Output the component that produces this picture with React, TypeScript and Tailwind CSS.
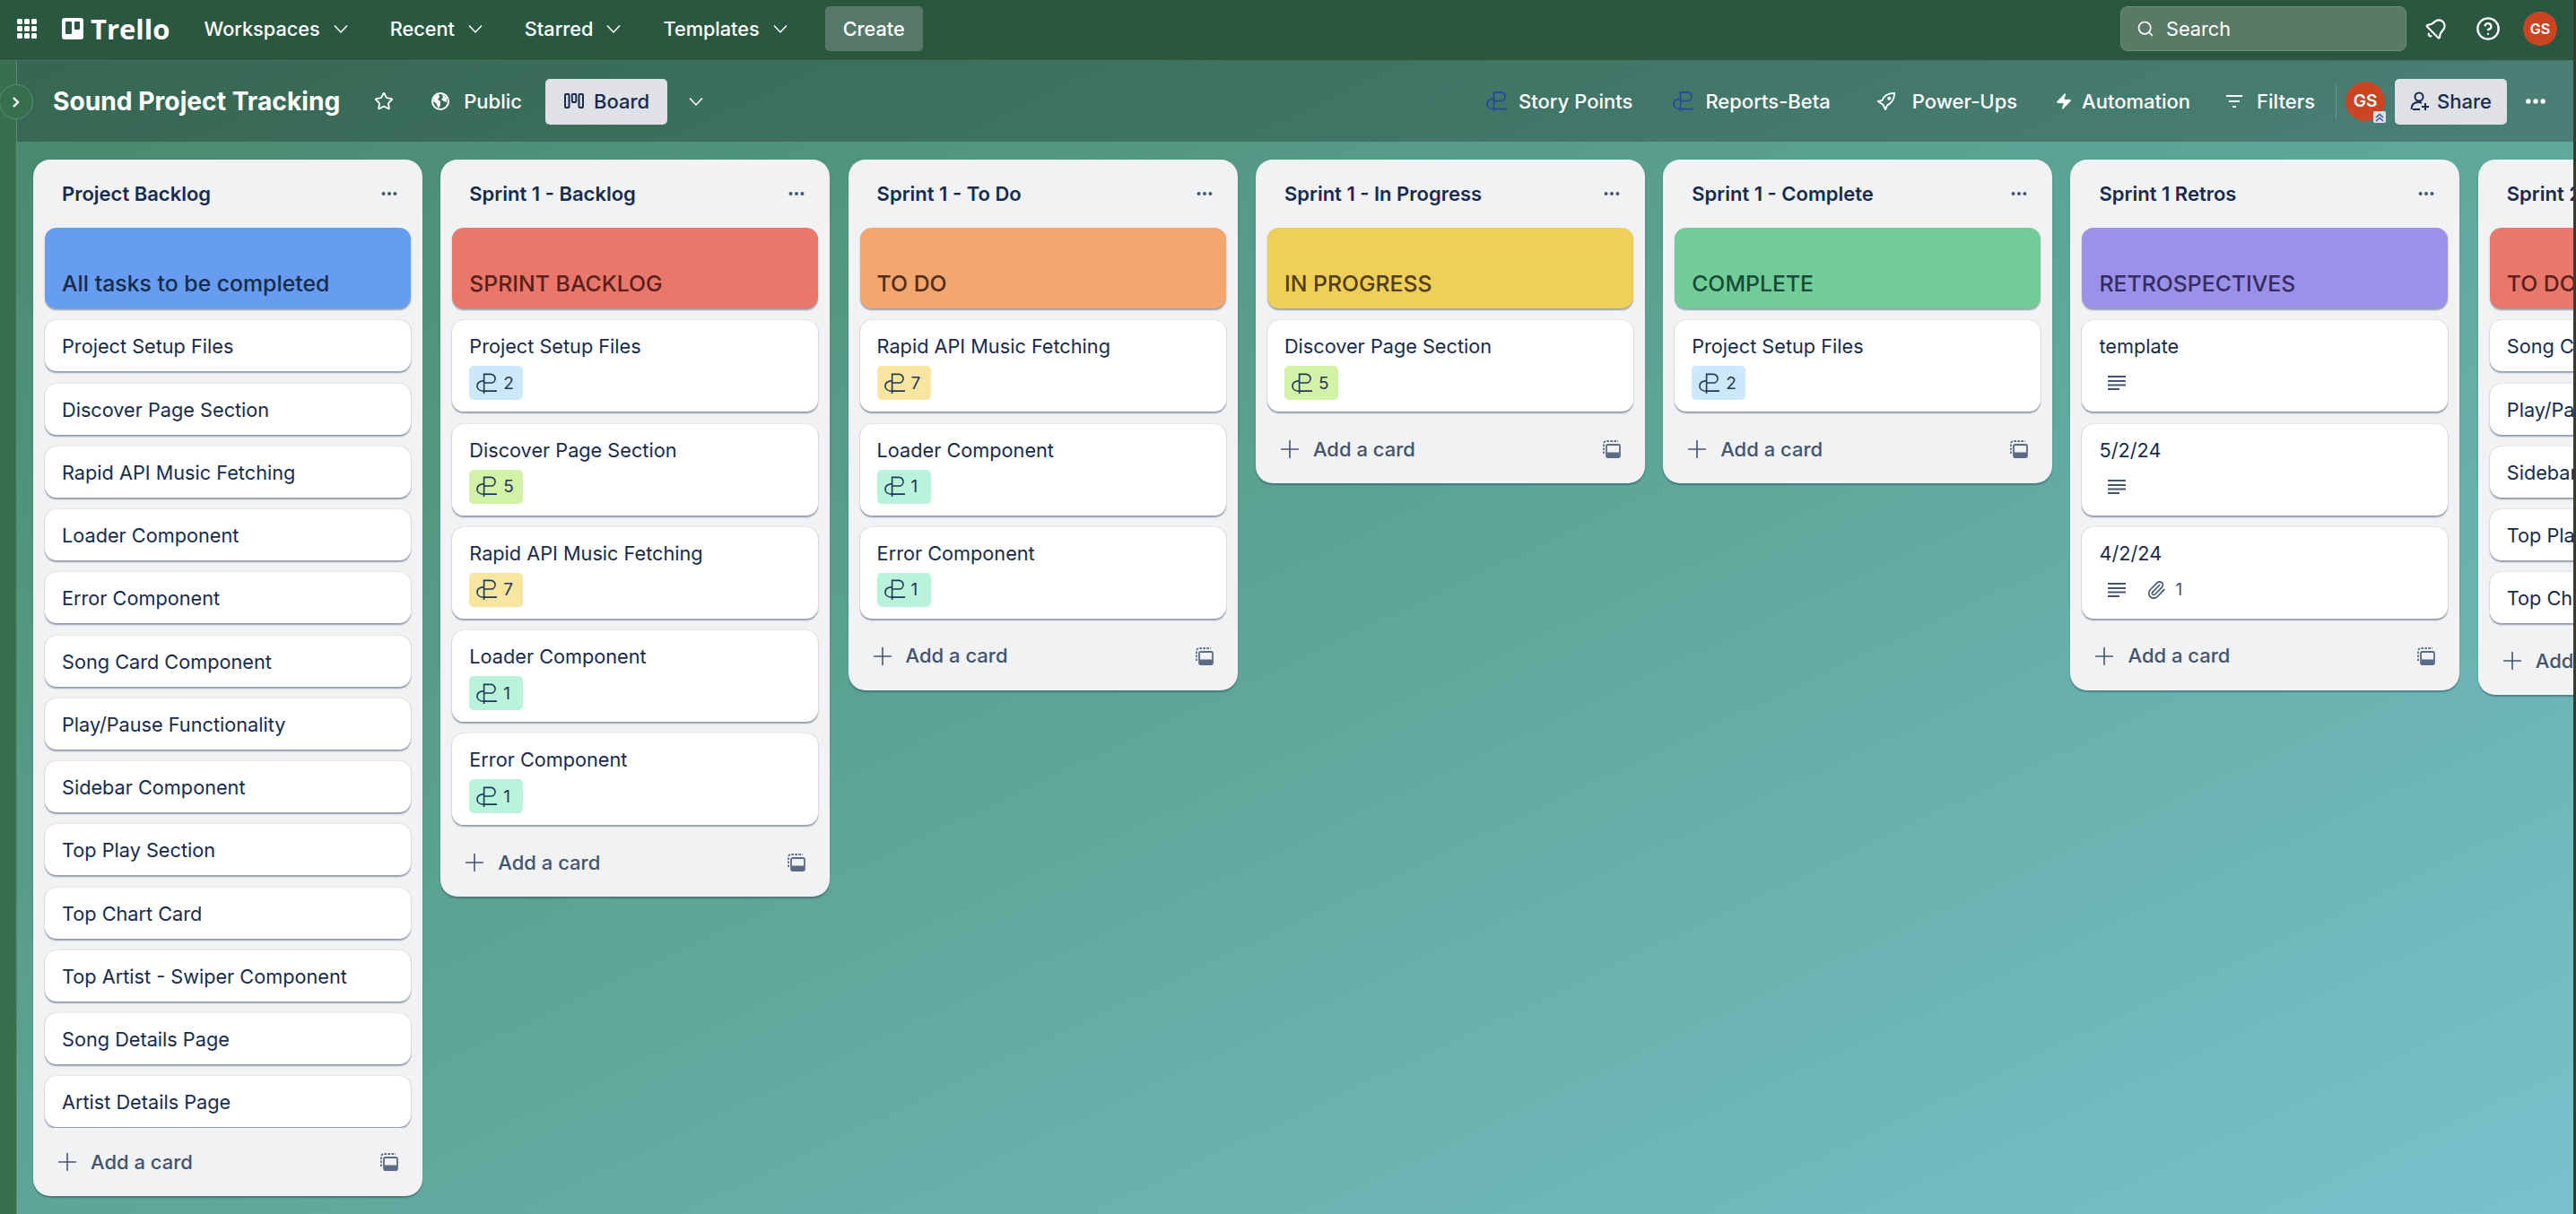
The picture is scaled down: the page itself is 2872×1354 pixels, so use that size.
import { CircleHelp, Bell, Plus, Search, Star, Paperclip, Zap, Ellipsis } from 'lucide-react'

type Card = { title: string; points?: number; description?: boolean; attachments?: number }
type List = { title: string; cover: string; coverClass: string; cards: Card[] }

const BADGE_COLORS: Record<number, string> = {
  1: 'bg-[#baf3db]',
  2: 'bg-[#cce8fa]',
  5: 'bg-[#d3f1a7]',
  7: 'bg-[#f8e6a0]',
}

const LISTS: List[] = [
  {
    title: 'Project Backlog',
    cover: 'All tasks to be completed',
    coverClass: 'bg-[#669df1] text-[#172b4d]',
    cards: [
      'Project Setup Files',
      'Discover Page Section',
      'Rapid API Music Fetching',
      'Loader Component',
      'Error Component',
      'Song Card Component',
      'Play/Pause Functionality',
      'Sidebar Component',
      'Top Play Section',
      'Top Chart Card',
      'Top Artist - Swiper Component',
      'Song Details Page',
      'Artist Details Page',
    ].map((title) => ({ title })),
  },
  {
    title: 'Sprint 1 - Backlog',
    cover: 'SPRINT BACKLOG',
    coverClass: 'bg-[#e9776c] text-[#5d1f1a]',
    cards: [
      { title: 'Project Setup Files', points: 2 },
      { title: 'Discover Page Section', points: 5 },
      { title: 'Rapid API Music Fetching', points: 7 },
      { title: 'Loader Component', points: 1 },
      { title: 'Error Component', points: 1 },
    ],
  },
  {
    title: 'Sprint 1 - To Do',
    cover: 'TO DO',
    coverClass: 'bg-[#f4a66f] text-[#4f2e14]',
    cards: [
      { title: 'Rapid API Music Fetching', points: 7 },
      { title: 'Loader Component', points: 1 },
      { title: 'Error Component', points: 1 },
    ],
  },
  {
    title: 'Sprint 1 - In Progress',
    cover: 'IN PROGRESS',
    coverClass: 'bg-[#efcf5a] text-[#533f04]',
    cards: [{ title: 'Discover Page Section', points: 5 }],
  },
  {
    title: 'Sprint 1 - Complete',
    cover: 'COMPLETE',
    coverClass: 'bg-[#72cc9a] text-[#164b35]',
    cards: [{ title: 'Project Setup Files', points: 2 }],
  },
  {
    title: 'Sprint 1 Retros',
    cover: 'RETROSPECTIVES',
    coverClass: 'bg-[#9c91e8] text-[#352c63]',
    cards: [
      { title: 'template', description: true },
      { title: '5/2/24', description: true },
      { title: '4/2/24', description: true, attachments: 1 },
    ],
  },
  {
    title: 'Sprint 2 - To Do',
    cover: 'TO DO',
    coverClass: 'bg-[#e9776c] text-[#5d1f1a]',
    cards: [
      'Song Card Component',
      'Play/Pause Functionality',
      'Sidebar Component',
      'Top Play Section',
      'Top Chart Card',
    ].map((title) => ({ title })),
  },
]

function Chevron({ className = '' }: { className?: string }) {
  return (
    <svg viewBox="0 0 20 20" className={`h-5 w-5 shrink-0 ${className}`} fill="none" stroke="currentColor" strokeWidth="1.5">
      <path d="M3 6.5l7 7.5 7-7.5" />
    </svg>
  )
}

// custom power-up glyph used on the badges and the board bar
function PointsIcon({ className = '' }: { className?: string }) {
  return (
    <svg viewBox="0 0 24 24" className={className} fill="none" stroke="currentColor" strokeWidth="1.7">
      <path d="M9 24V1.500h8a5 5 0 0 1 0 10H9" />
      <path d="M9 9C4 9.500 1 11.500 1 15S4 21 9 21h15" />
    </svg>
  )
}

function DescriptionIcon() {
  return (
    <svg viewBox="0 0 20 20" className="h-5 w-5" fill="#44546f">
      <rect x="0" y="2" width="20" height="2" />
      <rect x="0" y="7" width="20" height="2" />
      <rect x="0" y="11.500" width="20" height="2" />
      <rect x="0" y="16" width="13" height="2" />
    </svg>
  )
}

function TemplateIcon() {
  return (
    <svg viewBox="0 0 20 20" className="h-5 w-5" fill="none" stroke="#5b6b85" strokeWidth="1.800">
      <path d="M1 15V4a3 3 0 0 1 3-3h13" strokeDasharray="2.500 1.500" />
      <rect x="4" y="5" width="15" height="14" rx="1.500" />
      <path d="M5 13.500h13V18H5z" fill="#5b6b85" stroke="none" />
    </svg>
  )
}

function GlobeIcon() {
  return (
    <svg viewBox="0 0 20 20" className="h-5 w-5">
      <circle cx="10" cy="10" r="9" fill="none" stroke="white" strokeWidth="2" />
      <path d="M3 5l5-3 1 3-2 3 3 2v4l-2 4-3-6-3-2zM12 2l5 4v5l-3-1-3-2 2-2z" fill="white" />
    </svg>
  )
}

function BoardIcon() {
  return (
    <svg viewBox="0 0 22 20" className="h-5 w-[22px]" fill="none" stroke="#172b4d" strokeWidth="2">
      <rect x="1" y="2" width="4.500" height="15" rx="1" />
      <rect x="8.800" y="2" width="4.500" height="9" rx="1" />
      <rect x="16.500" y="2" width="4.500" height="15" rx="1" />
    </svg>
  )
}

function RocketIcon() {
  return (
    <svg viewBox="0 0 24 24" className="h-[22px] w-[22px]" fill="none" stroke="white" strokeWidth="2" strokeLinejoin="round">
      <path d="M22 2C14 2 9 5 7 11l-5 1 6 4 3 6 2-5c6-3 9-8 9-15z" />
      <circle cx="15.500" cy="8.500" r="1.200" fill="white" />
    </svg>
  )
}

function FilterIcon() {
  return (
    <svg viewBox="0 0 20 20" className="h-5 w-5" fill="white">
      <rect x="1" y="3" width="18" height="2" />
      <rect x="4" y="9" width="12" height="2" />
      <rect x="8" y="15" width="4" height="2" />
    </svg>
  )
}

function BoardCard({ card }: { card: Card }) {
  return (
    <div className="shrink-0 rounded-[13px] bg-white px-[19px] pb-[13px] pt-[14px] shadow-[0_1.500px_1.500px_#091e4260,0_0_1.500px_#091e4230]">
      <div className="text-[21.700px] leading-[30px] text-[#172b4d]">{card.title}</div>
      {card.points && (
        <div className={`mt-[7px] flex h-[38px] w-[60px] items-center rounded-[5px] pl-[8px] text-[#1f3a58] ${BADGE_COLORS[card.points]}`}>
          <PointsIcon className="h-[23px] w-[23px]" />
          <span className="ml-[7px] text-[19px] leading-none">{card.points}</span>
        </div>
      )}
      {card.description && (
        <div className="mt-[7px] flex h-[38px] items-center pl-[10px] text-[#44546f]">
          <DescriptionIcon />
          {card.attachments && (
            <>
              <Paperclip className="ml-[23px] h-[22px] w-[22px]" strokeWidth={1.8} />
              <span className="ml-[10px] text-[19px] leading-none">{card.attachments}</span>
            </>
          )}
        </div>
      )}
    </div>
  )
}

function BoardList({ list }: { list: List }) {
  return (
    <div className="flex max-h-[1156px] w-[434px] shrink-0 flex-col rounded-[19px] bg-[#f1f2f4] shadow-[0_1.500px_1.500px_#091e4250]">
      <div className="flex h-[76px] shrink-0 items-center justify-between pl-[32px] pr-[26px]">
        <span className="text-[22px] font-semibold text-[#172b4d]">{list.title}</span>
        <Ellipsis className="h-[22px] w-[22px] text-[#44546f]" strokeWidth={2.4} />
      </div>

      <div className="flex min-h-0 flex-1 flex-col gap-[13.250px] overflow-hidden px-[13px] pb-[4px]">
        <div className={`flex h-[90px] shrink-0 items-end rounded-[13px] px-[19px] pb-[10px] text-[24.800px] font-medium leading-[36px] shadow-[0_1.500px_1.500px_#091e4260] ${list.coverClass}`}>
          {list.cover}
        </div>
        {list.cards.map((card) => (
          <BoardCard key={card.title} card={card} />
        ))}
      </div>

      <div className="flex h-[76px] shrink-0 items-center pl-[22px] pr-[27px] text-[#44546f]">
        <Plus className="h-[32px] w-[32px]" strokeWidth={1.2} />
        <span className="ml-[10px] flex-1 text-[22px] font-medium">Add a card</span>
        <TemplateIcon />
      </div>
    </div>
  )
}

function BarItem({ icon, label, className = '' }: { icon: React.ReactNode; label: string; className?: string }) {
  return (
    <div className={`flex items-center text-[22px] font-medium text-white ${className}`}>
      {icon}
      <span>{label}</span>
    </div>
  )
}

function Avatar({ size, text }: { size: string; text: string }) {
  return (
    <div className={`flex items-center justify-center rounded-full bg-[#cb4525] font-semibold text-white ${size} ${text}`}>GS</div>
  )
}

export default function App() {
  return (
    <div className="flex h-screen w-full overflow-hidden bg-[#3b3a2a] font-['Inter',sans-serif]">
      <div className="flex min-w-0 flex-1 flex-col bg-[linear-gradient(to_bottom_right,#46866a,#5ea596,#78c2cd)]">
        {/* Top nav */}
        <header className="flex h-[68px] shrink-0 items-center border-b border-[#4b7560] bg-[#2a573f] pb-[3px] pl-[19px] pr-[18px] text-white">
          <div className="grid h-[22px] w-[22px] grid-cols-3 gap-[2px]">
            {Array.from({ length: 9 }).map((_, i) => (
              <span key={i} className="rounded-[1.500px] bg-white" />
            ))}
          </div>
          <div className="ml-[28px] flex h-[24px] w-[24px] gap-[3px] rounded-[3px] bg-white p-[4px]">
            <span className="h-[14px] w-[7px] rounded-[1px] bg-[#2a573f]" />
            <span className="h-[9px] w-[7px] rounded-[1px] bg-[#2a573f]" />
          </div>
          <span className="ml-[8px] font-['Open_Sans',sans-serif] text-[31px] font-bold leading-none">Trello</span>
          <nav className="ml-[38px] flex items-center gap-[45px] text-[21.700px] font-medium">
            {['Workspaces', 'Recent', 'Starred', 'Templates'].map((item) => (
              <div key={item} className="flex items-center gap-[13px]">
                {item}
                <Chevron />
              </div>
            ))}
          </nav>
          <button className="ml-[40px] h-[50px] w-[109px] rounded-[5px] bg-[#567866] text-[21.700px] font-medium">Create</button>
          <div className="ml-auto flex h-[50px] w-[319px] items-center rounded-[8px] border border-[#6f8f7d] bg-[#587a66] pl-[17px] text-[21.700px]">
            <Search className="h-5 w-5" strokeWidth={2} />
            <span className="ml-[13px]">Search</span>
          </div>
          <Bell className="ml-[20px] h-[26px] w-[26px] rotate-45" strokeWidth={2} />
          <CircleHelp className="ml-[31px] h-[28px] w-[28px]" strokeWidth={2} />
          <Avatar size="ml-[25px] h-[38px] w-[38px]" text="text-[16px]" />
        </header>

        <div className="flex min-h-0 flex-1">
          {/* Collapsed workspace sidebar */}
          <div className="relative w-[19px] shrink-0 border-r border-[#5c8c74] bg-[#37704f]">
            <div className="absolute left-[-1px] top-[26px] flex h-[39px] w-[38px] items-center justify-center rounded-full border border-[#5c8c74] bg-[#37704f] text-white">
              <svg viewBox="0 0 12 14" className="h-[14px] w-[12px]" fill="none" stroke="currentColor" strokeWidth="2.400">
                <path d="M3 2l5 5-5 5" />
              </svg>
            </div>
          </div>

          <main className="flex min-w-0 flex-1 flex-col">
            {/* Board bar */}
            <div className="flex h-[90px] shrink-0 items-center bg-black/24 pl-[40px] pr-[28px]">
              <h1 className="text-[28.200px] font-bold text-white">Sound Project Tracking</h1>
              <Star className="ml-[38px] h-[22px] w-[22px] text-white" strokeWidth={2} />
              <BarItem icon={<GlobeIcon />} label="Public" className="ml-[42px] gap-[16px]" />
              <div className="ml-[26px] flex h-[51px] w-[136px] items-center gap-[11px] rounded-[5px] bg-[#dfe1e6] pl-[21px] text-[22px] font-medium text-[#172b4d]">
                <BoardIcon />
                Board
              </div>
              <Chevron className="ml-[22px] text-white" />

              <div className="ml-auto flex items-center">
                <BarItem icon={<PointsIcon className="h-[24px] w-[23px] text-[#1f4a9c]" />} label="Story Points" className="gap-[13px]" />
                <BarItem icon={<PointsIcon className="h-[24px] w-[23px] text-[#1f4a9c]" />} label="Reports-Beta" className="ml-[45px] gap-[13px]" />
                <BarItem icon={<RocketIcon />} label="Power-Ups" className="ml-[51px] gap-[18px]" />
                <BarItem icon={<Zap className="h-[24px] w-[20px] fill-white text-white" strokeWidth={1} />} label="Automation" className="ml-[42px] gap-[10px]" />
                <BarItem icon={<FilterIcon />} label="Filters" className="ml-[39px] gap-[15px]" />
                <div className="ml-[23px] h-[38px] w-px bg-white/20" />
                <div className="relative ml-[10px]">
                  <Avatar size="h-[44px] w-[44px]" text="text-[19px]" />
                  <div className="absolute bottom-[-2px] right-[-1px] flex h-[13px] w-[14px] items-center justify-center rounded-[2px] bg-[#dfe1e6]">
                    <svg viewBox="0 0 12 12" className="h-[12px] w-[12px]" fill="none" stroke="#3c4fc4" strokeWidth="1.600">
                      <path d="M2 6l4-3.500L10 6M2 10l4-3.500L10 10" />
                    </svg>
                  </div>
                </div>
                <div className="ml-[11px] flex h-[51px] w-[125px] items-center justify-center gap-[8px] rounded-[5px] bg-[#dfe1e6] text-[22px] font-medium text-[#172b4d]">
                  <svg viewBox="0 0 22 22" className="h-[22px] w-[22px]" fill="none" stroke="#172b4d" strokeWidth="2">
                    <circle cx="10" cy="6" r="4.500" />
                    <path d="M1.500 20c0-5 3-8 8-8 1.500 0 2.500.300 3.500.800M3 20h8M17 13v8M13 17h8" />
                  </svg>
                  Share
                </div>
                <Ellipsis className="ml-[18px] h-[28px] w-[28px] text-white" strokeWidth={2.6} />
              </div>
            </div>

            {/* Lists */}
            <div className="flex min-h-0 flex-1 items-start gap-[20.300px] overflow-hidden pl-[18px] pt-5">
              {LISTS.map((list) => (
                <BoardList key={list.title} list={list} />
              ))}
            </div>
          </main>
        </div>
      </div>
      <div className="w-[3px] shrink-0" />
    </div>
  )
}
